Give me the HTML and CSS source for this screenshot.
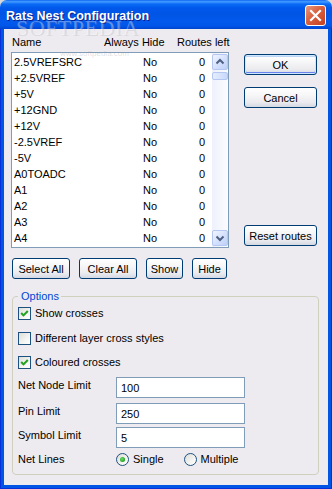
FILE: index.html
```html
<!DOCTYPE html>
<html>
<head>
<meta charset="utf-8">
<link rel="stylesheet" href="styles.css">
</head>
<body>
<div class="window">
  <div class="titlebar">
    <span class="title">Rats Nest Configuration</span>
    <span class="close"><svg width="21" height="21" viewBox="0 0 21 21"><path d="M6 6 L15 15 M15 6 L6 15" stroke="#fff" stroke-width="2.2" stroke-linecap="square" fill="none"/></svg></span>
  </div>
  <div class="frame">
    <div class="client">
      <div class="top">
        <div class="left">
          <div class="listhead"><span>Name</span><span>Always Hide</span><span>Routes left</span></div>
          <div class="listbox">
            <div class="rows">
              <div class="row"><span>2.5VREFSRC</span><span>No</span><span>0</span></div>
              <div class="row"><span>+2.5VREF</span><span>No</span><span>0</span></div>
              <div class="row"><span>+5V</span><span>No</span><span>0</span></div>
              <div class="row"><span>+12GND</span><span>No</span><span>0</span></div>
              <div class="row"><span>+12V</span><span>No</span><span>0</span></div>
              <div class="row"><span>-2.5VREF</span><span>No</span><span>0</span></div>
              <div class="row"><span>-5V</span><span>No</span><span>0</span></div>
              <div class="row"><span>A0TOADC</span><span>No</span><span>0</span></div>
              <div class="row"><span>A1</span><span>No</span><span>0</span></div>
              <div class="row"><span>A2</span><span>No</span><span>0</span></div>
              <div class="row"><span>A3</span><span>No</span><span>0</span></div>
              <div class="row"><span>A4</span><span>No</span><span>0</span></div>
            </div>
            <div class="scrollbar">
              <div class="sb-btn"><svg width="14" height="14" viewBox="0 0 14 14"><path d="M3.5 8.5 L7 5 L10.5 8.5" stroke="#4D6185" stroke-width="2" fill="none"/></svg></div>
              <div class="thumb"></div>
              <div class="track"></div>
              <div class="sb-btn"><svg width="14" height="14" viewBox="0 0 14 14"><path d="M3.5 5.5 L7 9 L10.5 5.5" stroke="#4D6185" stroke-width="2" fill="none"/></svg></div>
            </div>
          </div>
          <div class="btnrow">
            <button class="btn w-select">Select All</button>
            <button class="btn w-clear">Clear All</button>
            <button class="btn w-show">Show</button>
            <button class="btn w-hide">Hide</button>
          </div>
        </div>
        <div class="right">
          <button class="btn default">OK</button>
          <button class="btn cancel">Cancel</button>
          <button class="btn reset">Reset routes</button>
        </div>
      </div>
      <fieldset class="group">
        <legend>Options</legend>
        <div class="checks">
          <div class="check"><span class="cbox"><svg width="11" height="11" viewBox="0 0 11 11"><path d="M2.2 5 L4.5 7.4 L8.8 3" stroke="#21A121" stroke-width="2" fill="none"/></svg></span><span>Show crosses</span></div>
          <div class="check"><span class="cbox"></span><span>Different layer cross styles</span></div>
          <div class="check"><span class="cbox"><svg width="11" height="11" viewBox="0 0 11 11"><path d="M2.2 5 L4.5 7.4 L8.8 3" stroke="#21A121" stroke-width="2" fill="none"/></svg></span><span>Coloured crosses</span></div>
        </div>
        <div class="field f1"><span class="flabel">Net Node Limit</span><input class="tbox" type="text" value="100"></div>
        <div class="field f2"><span class="flabel">Pin Limit</span><input class="tbox" type="text" value="250"></div>
        <div class="field f3"><span class="flabel">Symbol Limit</span><input class="tbox" type="text" value="5"></div>
        <div class="field f4">
          <span class="flabel rl">Net Lines</span>
          <div class="radios">
            <div class="radio"><span class="rcircle on"><span class="dot"></span></span><span>Single</span></div>
            <div class="radio"><span class="rcircle"></span><span>Multiple</span></div>
          </div>
        </div>
      </fieldset>
    </div>
  </div>
  <div class="watermark">SOFTPEDIA</div>
  <div class="wm-url">www.softpedia.com</div>
</div>
</body>
</html>
```
FILE: styles.css
```css
* { box-sizing: border-box; }
html, body { margin: 0; padding: 0; }
body {
  width: 332px;
  height: 489px;
  overflow: hidden;
  background: #d8d8d8;
  font-family: "Liberation Sans", Arial, sans-serif;
  font-size: 11px;
  color: #000;
}
.window {
  position: relative;
  width: 332px;
  height: 489px;
  display: flex;
  flex-direction: column;
}
.titlebar {
  flex: none;
  height: 29px;
  display: flex;
  align-items: center;
  justify-content: space-between;
  padding: 0 6px 0 6px;
  border-radius: 7px 7px 0 0;
  background: linear-gradient(to bottom, #0058EE 0, #3D95FF 1px, #3D95FF 2px, #0A6BF5 4px, #0058EB 8px, #0055E5 14px, #0259EC 22px, #0056E8 26px, #0044CF 29px);
}
.title {
  color: #fff;
  font-weight: bold;
  font-size: 12.5px;
  padding-top: 2px;
  text-shadow: 1px 1px 0 #0A1E8C;
}
.close {
  width: 21px;
  height: 21px;
  margin-top: 2px;
  border: 1px solid #fff;
  border-radius: 3px;
  background: linear-gradient(135deg, #E8977C 0%, #D8603F 45%, #C4401F 100%);
  display: flex;
  align-items: center;
  justify-content: center;
}
.close svg { flex: none; }
.frame {
  flex: 1;
  display: flex;
  padding: 0 3px 3px;
  background: #0055E5;
  border: 1px solid #0831D9;
  border-top: 0;
}
.client {
  flex: 1;
  display: flex;
  flex-direction: column;
  background: #EDEBEF;
}
.top {
  display: flex;
  padding: 6px 0 0 7px;
}
.left {
  width: 218px;
  display: flex;
  flex-direction: column;
}
.listhead {
  display: grid;
  grid-template-columns: 92px 73px 1fr;
  padding-left: 1px;
  height: 14px;
  line-height: 14px;
  margin-bottom: 3px;
  white-space: nowrap;
}
.listbox {
  display: flex;
  height: 196px;
  border: 1px solid #7F9DB9;
  background: #fff;
}
.rows {
  flex: 1;
  padding-top: 1px;
}
.row {
  display: grid;
  grid-template-columns: 129px 1fr auto;
  height: 16px;
  line-height: 16px;
  padding: 0 7px 0 2px;
}
.scrollbar {
  width: 16px;
  display: flex;
  flex-direction: column;
  padding: 1px 0;
  background: linear-gradient(to right, #EEF1FB, #FBFCFF);
}
.sb-btn {
  flex: none;
  width: 16px;
  height: 16px;
  border: 1px solid #B4C6F2;
  border-radius: 2px;
  background: linear-gradient(135deg, #F1F5FF 0%, #D6E2FD 50%, #BFD0F8 100%);
  display: flex;
  align-items: center;
  justify-content: center;
}
.thumb {
  flex: none;
  height: 8px;
  margin-top: 2px;
  border: 1px solid #B4C6F2;
  border-radius: 2px;
  background: linear-gradient(to right, #E6EEFE, #C9D8FB);
}
.track { flex: 1; }
.btn {
  height: 21px;
  padding: 0;
  font: inherit;
  color: #000;
  border: 1px solid #003C74;
  border-radius: 3px;
  background: linear-gradient(to bottom, #FFFFFF 0%, #F7F7F8 35%, #EBEBEF 75%, #D4D8E2 100%);
  display: flex;
  align-items: center;
  justify-content: center;
  white-space: nowrap;
}
.btnrow {
  display: flex;
  gap: 9px;
  margin-top: 10px;
  padding-left: 1px;
}
.w-select { width: 58px; }
.w-clear { width: 58px; }
.w-show { width: 37px; }
.w-hide { width: 35px; }
.right {
  width: 73px;
  margin-left: 15px;
  padding-top: 19px;
  display: flex;
  flex-direction: column;
}
.right .btn { width: 73px; }
.default {
  box-shadow: inset 0 0 0 1px #CEE7FF, inset 0 -1px 0 1px #6982EE, inset 0 1px 0 1px #BCD4F6;
}
.cancel { margin-top: 12px; }
.reset { margin-top: 117px; }
.group {
  margin: 11px 9px 0 8px;
  padding: 0 5px 8px 5px;
  border: 1px solid #D0D0BF;
  border-radius: 4px;
  min-width: 0;
}
.group legend {
  color: #0046D5;
  padding: 0 2px 0 3px;
  line-height: 13px;
}
.checks {
  display: flex;
  flex-direction: column;
  gap: 11.5px;
  padding-top: 4px;
}
.check {
  display: flex;
  align-items: center;
  gap: 4px;
  height: 13px;
  line-height: 13px;
}
.cbox {
  flex: none;
  width: 13px;
  height: 13px;
  border: 1px solid #1C5180;
  background: linear-gradient(135deg, #DCDCD7 0%, #F4F4F2 60%, #FFFFFF 100%);
  display: flex;
}
.field {
  display: flex;
  align-items: flex-start;
}
.f1 { margin-top: 8px; }
.f2 { margin-top: 5px; }
.f3 { margin-top: 3px; }
.f4 { margin-top: 5px; align-items: center; height: 13px; }
.flabel {
  width: 98px;
  flex: none;
  line-height: 16px;
}
.rl { line-height: 13px; }
.tbox {
  width: 129px;
  height: 21px;
  margin: 0;
  padding: 0 4px;
  border: 1px solid #7F9DB9;
  background: #fff;
  font: inherit;
  color: #000;
  outline: none;
}
.radios {
  display: flex;
  gap: 20px;
}
.radio {
  display: flex;
  align-items: center;
  gap: 4px;
  height: 13px;
  line-height: 13px;
}
.rcircle {
  flex: none;
  width: 13px;
  height: 13px;
  border: 1px solid #1C5180;
  border-radius: 50%;
  background: linear-gradient(135deg, #DCDCD7 0%, #F4F4F2 60%, #FFFFFF 100%);
  display: flex;
  align-items: center;
  justify-content: center;
}
.dot {
  width: 5px;
  height: 5px;
  border-radius: 50%;
  background: radial-gradient(circle at 40% 40%, #6BDF6B 0%, #21A121 70%);
}
.watermark {
  position: absolute;
  left: 17px;
  top: 18px;
  font-family: "Liberation Serif", serif;
  font-size: 22px;
  line-height: 22px;
  letter-spacing: 0.5px;
  color: rgba(150, 150, 165, 0.22);
  text-shadow: -1px -1px 0 rgba(255, 255, 255, 0.35);
  pointer-events: none;
}
.wm-url {
  position: absolute;
  left: 60px;
  top: 49px;
  font-size: 8px;
  line-height: 9px;
  color: rgba(150, 150, 165, 0.3);
  pointer-events: none;
}
```
